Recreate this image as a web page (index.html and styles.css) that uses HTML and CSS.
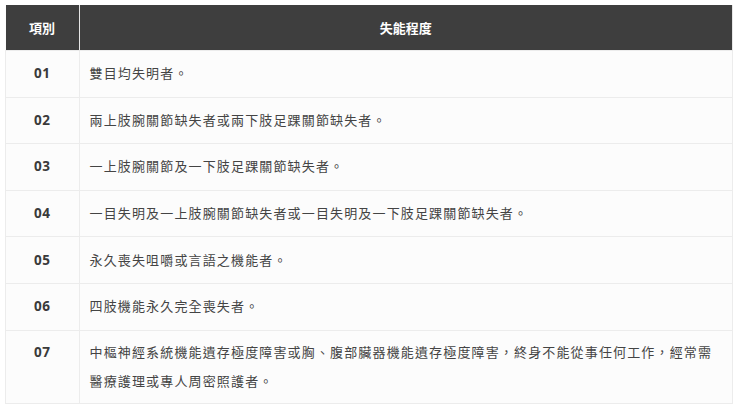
FILE: index.html
```html
<!DOCTYPE html>
<html lang="zh-Hant">
<head>
<meta charset="utf-8">
<link rel="stylesheet" href="styles.css">
</head>
<body>
<div class="wrap">
<table class="grid">
  <thead>
    <tr><th class="c-no">項別</th><th class="c-desc">失能程度</th></tr>
  </thead>
  <tbody>
    <tr><td class="no">01</td><td class="desc">雙目均失明者。</td></tr>
    <tr><td class="no">02</td><td class="desc">兩上肢腕關節缺失者或兩下肢足踝關節缺失者。</td></tr>
    <tr><td class="no">03</td><td class="desc">一上肢腕關節及一下肢足踝關節缺失者。</td></tr>
    <tr><td class="no">04</td><td class="desc">一目失明及一上肢腕關節缺失者或一目失明及一下肢足踝關節缺失者。</td></tr>
    <tr><td class="no">05</td><td class="desc">永久喪失咀嚼或言語之機能者。</td></tr>
    <tr><td class="no">06</td><td class="desc">四肢機能永久完全喪失者。</td></tr>
    <tr><td class="no top">07</td><td class="desc">中樞神經系統機能遺存極度障害或胸、腹部臟器機能遺存極度障害，終身不能從事任何工作，經常需醫療護理或專人周密照護者。</td></tr>
  </tbody>
</table>
</div>
</body>
</html>
```

FILE: styles.css
```css
html, body {
  margin: 0;
  padding: 0;
  background: #ffffff;
}
.wrap {
  padding: 5px 7px 0 5px;
}
.grid {
  width: 728px;
  border-collapse: collapse;
  font-family: "Noto Sans", "Noto Sans CJK TC", sans-serif;
  color: #333333;
  background: #fcfcfc;
}
.grid th {
  background: #3e3e3e;
  color: #ffffff;
  font-size: 13px;
  font-weight: 700;
  height: 45px;
  padding: 0;
  text-align: center;
  border-right: 1px solid #e6e6e6;
}
.grid th.c-no {
  width: 73px;
}
.grid tbody tr {
  height: 46.6px;
}
.grid td {
  border: 1px solid #ececec;
  font-size: 13px;
  line-height: 29px;
  padding: 7px 10px;
  vertical-align: middle;
}
.grid td.no {
  text-align: center;
  font-size: 13.5px;
  font-weight: 700;
  color: #3a3a3a;
  padding: 7px 0;
  letter-spacing: 0.5px;
}
.grid td.top {
  vertical-align: top;
}
.grid td.desc {
  letter-spacing: 1.15px;
  font-weight: 400;
  color: #444444;
}
```
